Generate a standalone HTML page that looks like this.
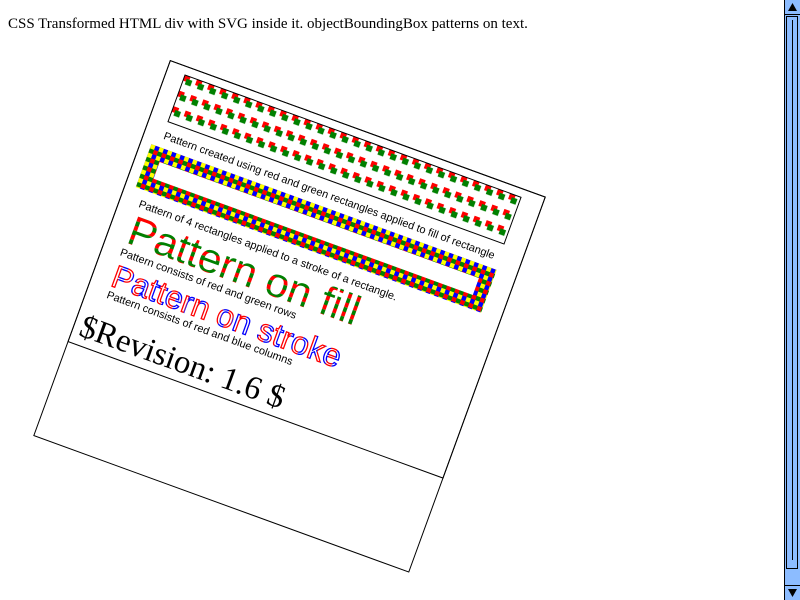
<!DOCTYPE html>
<html><head><style>
html,body{margin:0;padding:0;background:#fff;overflow:hidden}
body{width:800px;height:600px;position:relative}
.t{position:absolute;left:8px;top:16px;font:15px "Liberation Serif",serif;color:#000;white-space:nowrap}
.box{position:absolute;left:170px;top:60px;width:398px;height:398px;border:1px solid #000;transform-origin:0 0;transform:rotate(20deg);background:#fff}
.box svg{display:block;width:398px;height:298px;border:1px solid #000;margin:-1px 0 0 -1px}
.sb{position:absolute;left:784px;top:0;width:16px;height:600px;background:#8cbcff;border-left:1px solid #000;box-sizing:border-box}
.sb .up,.sb .dn{position:absolute;left:0;width:15px;height:14px;border-bottom:1px solid #000;background:#8cbcff}
.sb .dn{top:585px;border-top:1px solid #000;border-bottom:none}
.sb .up{top:0}
.sb .thumb{position:absolute;left:1px;top:16px;width:12px;height:553px;border:1px solid #000;box-sizing:border-box}
.sb .thumb:after{content:"";position:absolute;left:5px;top:3px;width:1px;height:540px;background:#000}
</style></head><body>
<div class="t">CSS Transformed HTML div with SVG inside it. objectBoundingBox patterns on text.</div>
<div class="box">
<svg width="400" height="300" viewBox="0 0 400 300" xmlns="http://www.w3.org/2000/svg">
<defs>
<pattern id="p1" patternUnits="userSpaceOnUse" x="18" y="8" width="12.9" height="16.7">
<rect x="0" y="0" width="6" height="6" fill="red"/><rect x="3" y="3" width="6" height="6" fill="green"/>
</pattern>
<pattern id="p2" patternUnits="userSpaceOnUse" x="10" y="85" width="9" height="9">
<rect x="0" y="0" width="4.5" height="4.5" fill="yellow"/><rect x="4.5" y="0" width="4.5" height="4.5" fill="blue"/>
<rect x="0" y="4.5" width="4.5" height="4.5" fill="green"/><rect x="4.5" y="4.5" width="4.5" height="4.5" fill="red"/>
</pattern>
<pattern id="p3" patternUnits="objectBoundingBox" width="1" height="0.2">
<rect x="0" y="0" width="400" height="4.8" fill="red"/><rect x="0" y="4.8" width="400" height="4.8" fill="green"/>
</pattern>
<pattern id="p4" patternUnits="objectBoundingBox" width="0.05" height="1">
<rect x="0" y="0" width="6.5" height="60" fill="red"/><rect x="6.5" y="0" width="6.5" height="60" fill="blue"/>
</pattern>
</defs>
<rect x="18" y="8" width="360" height="50" fill="url(#p1)" stroke="#000" stroke-width="1"/>
<text x="19" y="76" font-family="Liberation Sans, sans-serif" font-size="11">Pattern created using red and green rectangles applied to fill of rectangle</text>
<rect x="17" y="92" width="356" height="32" fill="none" stroke="url(#p2)" stroke-width="14"/>
<text x="19" y="149" font-family="Liberation Sans, sans-serif" font-size="11">Pattern of 4 rectangles applied to a stroke of a rectangle.</text>
<text x="19" y="187" font-family="Liberation Sans, sans-serif" font-size="42" fill="url(#p3)">Pattern on fill</text>
<text x="18" y="201" font-family="Liberation Sans, sans-serif" font-size="11">Pattern consists of red and green rows</text>
<text x="19" y="233" font-family="Liberation Sans, sans-serif" font-size="32" fill="none" stroke="url(#p4)" stroke-width="1.3">Pattern on stroke</text>
<text x="20" y="246" font-family="Liberation Sans, sans-serif" font-size="11">Pattern consists of red and blue columns</text>
<text x="6" y="291" font-family="Liberation Serif, serif" font-size="33">$Revision: 1.6 $</text>
</svg>
</div>
<div class="sb"><div class="up"><svg width="15" height="14"><path d="M3 11 L7.5 3 L12 11Z" fill="#000"/></svg></div><div class="thumb"></div><div class="dn"><svg width="15" height="14"><path d="M3 3 L7.5 11 L12 3Z" fill="#000"/></svg></div></div>
</body></html>
